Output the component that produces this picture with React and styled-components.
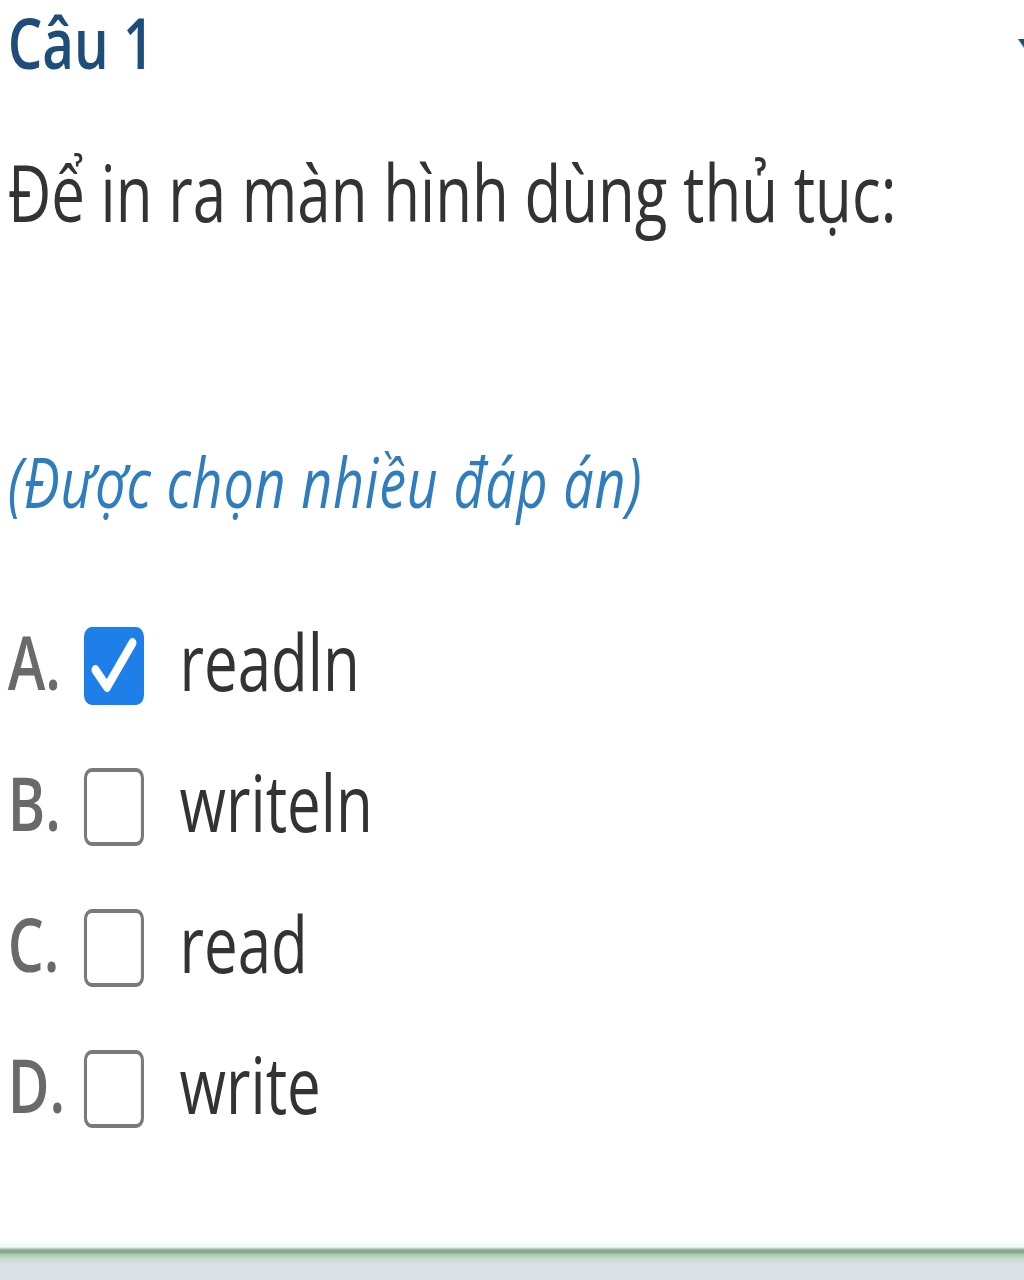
import styled, { createGlobalStyle } from "styled-components";

const GlobalStyle = createGlobalStyle`
  html, body {
    margin: 0;
    padding: 0;
    background: #ffffff;
    overflow: hidden;
  }
  body {
    font-family: "Open Sans", "Noto Sans", sans-serif;
  }
`;

// the screenshot is squeezed horizontally, so the whole page is laid out wider and scaled
const SCALE_X = 0.77;

const Viewport = styled.div`
  width: 1024px;
  height: 1280px;
  overflow: hidden;
`;

const Page = styled.div`
  width: ${1024 / SCALE_X}px;
  height: 1280px;
  transform: scaleX(${SCALE_X});
  transform-origin: top left;
  display: flex;
  flex-direction: column;
  padding-left: 10px;
  box-sizing: border-box;
`;

const Header = styled.div`
  display: flex;
  justify-content: space-between;
  align-items: flex-start;
  height: 84px;
  padding-top: 4px;
  box-sizing: border-box;
`;

const Title = styled.h2`
  margin: 0;
  font-size: 71px;
  line-height: 76px;
  font-weight: 600;
  color: #1d4d78;
`;

const Caret = styled.svg`
  margin-top: 32px;
  margin-right: -12px;
  width: 22px;
  height: 16px;
`;

const Question = styled.p`
  margin: 58px 0 0;
  font-size: 78px;
  line-height: 100px;
  color: #333333;
`;

const Hint = styled.p`
  margin: 197px 0 0;
  font-size: 70px;
  line-height: 84px;
  font-style: italic;
  letter-spacing: 1px;
  color: #2f7dbd;
`;

const Options = styled.div`
  margin-top: 68px;
  display: flex;
  flex-direction: column;
`;

const Row = styled.label`
  display: flex;
  align-items: center;
  height: 141px;
`;

const Letter = styled.span`
  width: 99px;
  font-size: 74px;
  line-height: 141px;
  font-weight: 600;
  color: #6a6a6a;
`;

const Box = styled.span`
  position: relative;
  width: 78px;
  height: 78px;
  margin-top: 8px;
  box-sizing: border-box;
  border-radius: 10px;
  border: 4px solid ${(p) => (p.$checked ? "#1f7fe8" : "#7a7a7a")};
  background: ${(p) => (p.$checked ? "#1f7fe8" : "#ffffff")};
`;

const Tick = styled.svg`
  position: absolute;
  left: -4px;
  top: -4px;
  width: 78px;
  height: 78px;
`;

const Answer = styled.span`
  margin-left: 46px;
  font-size: 78px;
  line-height: 141px;
  color: #333333;
`;

const Footer = styled.div`
  margin-top: auto;
  margin-left: -10px;
  height: 40px;
  background: linear-gradient(
    to bottom,
    #ffffff 0px,
    #eef8f1 7px,
    #8fa898 10px,
    #86a593 12px,
    #a9d3b3 15px,
    #c9ddd2 20px,
    #dce1e8 24px,
    #dce0e9 40px
  );
`;

const answers = [
  { letter: "A.", text: "readln", checked: true },
  { letter: "B.", text: "writeln", checked: false },
  { letter: "C.", text: "read", checked: false },
  { letter: "D.", text: "write", checked: false },
];

const App = () => {
  return (
    <Viewport>
      <GlobalStyle />
      <Page>
        <Header>
          <Title>Câu 1</Title>
          <Caret viewBox="0 0 22 16">
            <path d="M2 3 L11 13 L20 3 Z" fill="#1d4d78" />
          </Caret>
        </Header>
        <Question>Để in ra màn hình dùng thủ tục:</Question>
        <Hint>(Được chọn nhiều đáp án)</Hint>
        <Options>
          {answers.map((a) => (
            <Row key={a.letter}>
              <Letter>{a.letter}</Letter>
              <Box $checked={a.checked}>
                {a.checked && (
                  <Tick viewBox="0 0 78 78">
                    <path
                      d="M15 43 L30 60 L63 16"
                      fill="none"
                      stroke="#ffffff"
                      strokeWidth="10"
                      strokeLinecap="round"
                      strokeLinejoin="round"
                    />
                  </Tick>
                )}
              </Box>
              <Answer>{a.text}</Answer>
            </Row>
          ))}
        </Options>
        <Footer />
      </Page>
    </Viewport>
  );
};

export default App;
